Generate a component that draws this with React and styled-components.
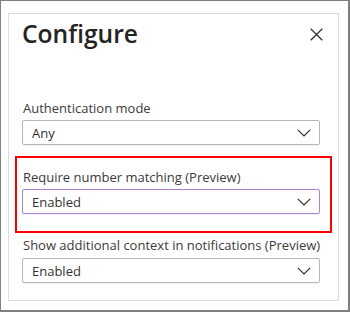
import React from "react";
import styled, { createGlobalStyle } from "styled-components";

const Global = createGlobalStyle`
  html, body { margin: 0; padding: 0; background: #ffffff; }
  * { box-sizing: border-box; }
`;

const Frame = styled.div`
  width: 350px;
  height: 312px;
  border: 1px solid #7f7f7f;
  border-right-width: 2px;
  border-bottom-width: 2px;
  padding: 12px 0 0 7px;
  background: #ffffff;
  font-family: "Open Sans", "Noto Sans", Arial, sans-serif;
`;

const Panel = styled.div`
  width: 331px;
  height: 288px;
  border: 1px solid #dcdcdc;
  padding: 0 17px 0 13px;
  display: flex;
  flex-direction: column;
`;

const Header = styled.div`
  display: flex;
  align-items: center;
  justify-content: space-between;
  height: 32px;
  margin-top: 4px;
  margin-bottom: 48px;
`;

const Title = styled.h1`
  margin: 0;
  font-size: 24.6px;
  line-height: 32px;
  font-weight: 600;
  color: #252423;
`;

const CloseButton = styled.button`
  border: 0;
  background: none;
  padding: 0;
  margin: 1px -2px 0 0;
  width: 14px;
  height: 14px;
  display: flex;
  align-items: center;
  justify-content: center;
  color: #323130;
  cursor: pointer;
`;

const Field = styled.div`
  display: flex;
  flex-direction: column;
  gap: ${(p) => p.$gap || 2}px;
  margin-top: ${(p) => p.$top || 0}px;
`;

const Label = styled.label`
  font-size: 13px;
  line-height: 20px;
  color: #3b3a39;
  padding-left: 1px;
  white-space: nowrap;
`;

const Select = styled.div`
  height: 25px;
  width: 298px;
  border: 1px solid ${(p) => (p.$active ? "#b07fd6" : "#b8b6b4")};
  border-radius: 2px;
  display: flex;
  align-items: center;
  justify-content: space-between;
  padding: 0 8px 0 9px;
  font-size: 13px;
  color: #323130;
  box-shadow: 0 1px 1px rgba(0, 0, 0, 0.06);
`;

const Highlight = styled.div`
  border: 2px solid #ff0000;
  margin: 11px -11px 0 -7px;
  padding: 9px 9px 17px 5px;
`;

const Chevron = () => (
  <svg width="14" height="8" viewBox="0 0 14 8" fill="none">
    <path d="M0.8 0.8 L7 7 L13.2 0.8" stroke="#323130" strokeWidth="1.2" />
  </svg>
);

const Dropdown = ({ value, active }) => (
  <Select $active={active}>
    <span>{value}</span>
    <Chevron />
  </Select>
);

export default function App() {
  return (
    <>
      <Global />
      <Frame>
        <Panel>
          <Header>
            <Title>Configure</Title>
            <CloseButton aria-label="Close">
              <svg width="13" height="13" viewBox="0 0 13 13" fill="none">
                <path d="M0.7 0.7 L12.3 12.3 M12.3 0.7 L0.7 12.3" stroke="#323130" strokeWidth="1.3" />
              </svg>
            </CloseButton>
          </Header>
          <Field>
            <Label>Authentication mode</Label>
            <Dropdown value="Any" />
          </Field>
          <Highlight>
            <Field>
              <Label>Require number matching (Preview)</Label>
              <Dropdown value="Enabled" active />
            </Field>
          </Highlight>
          <Field $gap={3} $top={2}>
            <Label>Show additional context in notifications (Preview)</Label>
            <Dropdown value="Enabled" />
          </Field>
        </Panel>
      </Frame>
    </>
  );
}
